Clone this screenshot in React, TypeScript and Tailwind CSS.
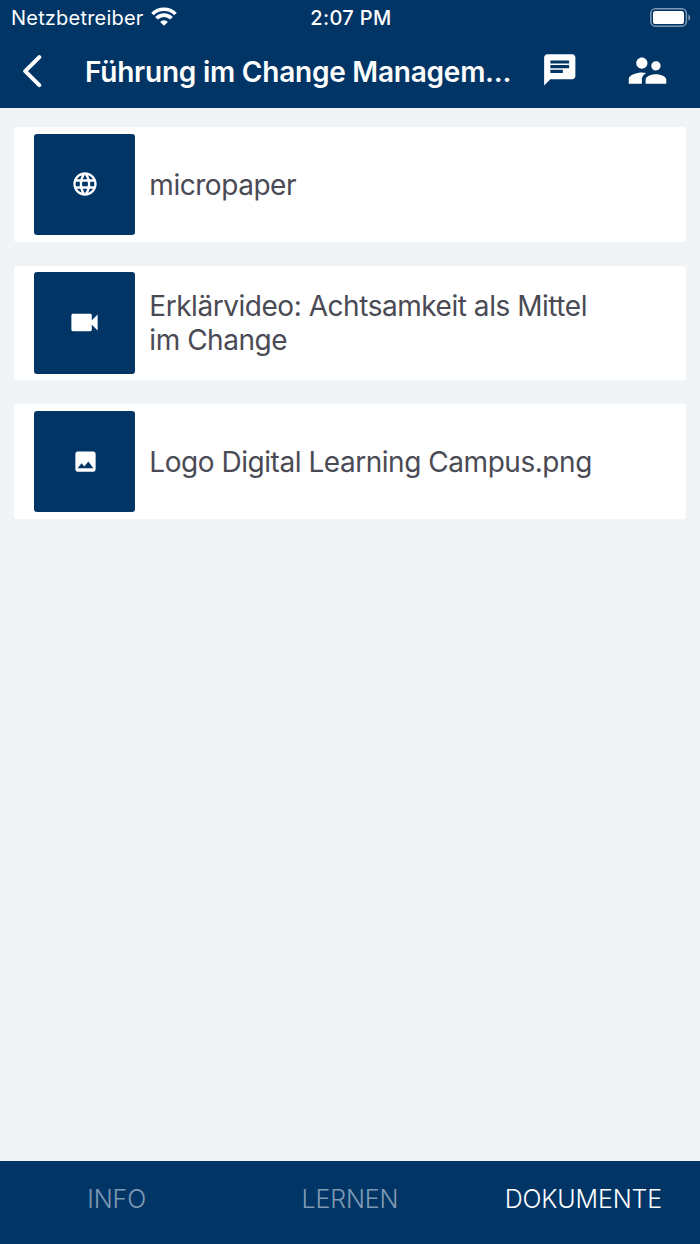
import type { IconType } from "react-icons";
import {
    MdChat,
    MdImage,
    MdLanguage,
    MdSupervisorAccount,
    MdVideocam,
} from "react-icons/md";

interface CourseDocument {
    title: string;
    icon: IconType;
    iconClass: string;
}

const documents: CourseDocument[] = [
    { title: "micropaper", icon: MdLanguage, iconClass: "size-[28px]" },
    {
        title: "Erklärvideo: Achtsamkeit als Mittel im Change",
        icon: MdVideocam,
        iconClass: "size-[35px]",
    },
    {
        title: "Logo Digital Learning Campus.png",
        icon: MdImage,
        iconClass: "size-[27px] ml-[2px]",
    },
];

const tabs = ["Info", "Lernen", "Dokumente"];

function StatusBar() {
    return (
        <div className="grid h-9 grid-cols-3 items-center pl-[11px] pr-[9px] text-[20px] leading-9">
            <div className="flex items-center gap-2">
                <span className="tracking-[0.2px]">Netzbetreiber</span>
                <svg
                    viewBox="0 0 26 19"
                    className="mb-[3px] -ml-px h-[19px] w-[26px] shrink-0"
                    fill="none"
                    stroke="currentColor"
                    strokeWidth="3.7"
                >
                    <path d="M1.5 7a16.3 16.3 0 0 1 23 0" />
                    <path d="M5.5 11.2a10.6 10.6 0 0 1 15 0" />
                    <path
                        d="M13 18.8l-3.9-3.9a5.5 5.5 0 0 1 7.8 0z"
                        fill="currentColor"
                        stroke="none"
                    />
                </svg>
            </div>
            <span className="text-center font-medium tracking-[0.4px]">
                2:07 PM
            </span>
            <svg
                viewBox="0 0 41 19"
                className="mb-[2px] h-[19px] w-[41px] justify-self-end"
            >
                <rect
                    x="0.8"
                    y="0.8"
                    width="35.6"
                    height="17.4"
                    rx="4.8"
                    fill="none"
                    stroke="#fff"
                    strokeOpacity="0.5"
                    strokeWidth="1.5"
                />
                <rect x="3" y="3" width="31" height="13" rx="2.6" fill="#fff" />
                <path
                    d="M38.4 6.4c2.4 1 2.4 5.2 0 6.2z"
                    fill="#fff"
                    fillOpacity="0.5"
                />
            </svg>
        </div>
    );
}

function Header() {
    return (
        <header className="h-[108px] shrink-0 bg-[#003566] text-white">
            <StatusBar />
            <div className="flex h-[70px] items-center pl-[22px] pr-[30px]">
                <button aria-label="Zurück">
                    <svg
                        viewBox="0 0 20 34"
                        className="h-[34px] w-[20px]"
                        fill="none"
                        stroke="currentColor"
                        strokeWidth="4"
                        strokeLinecap="round"
                        strokeLinejoin="round"
                    >
                        <path d="M17.3 3.2L3.2 17.2l14.1 14" />
                    </svg>
                </button>
                <h1 className="ml-[43px] w-[430px] truncate pt-px text-[28px] font-semibold tracking-[-0.23px]">
                    Führung im Change Managem...
                </h1>
                <button aria-label="Chat" className="mb-[2px] ml-[26px]">
                    <MdChat className="size-[37.5px]" />
                </button>
                <button aria-label="Teilnehmer" className="mb-[2px] ml-[46px]">
                    <MdSupervisorAccount className="size-[45px]" />
                </button>
            </div>
        </header>
    );
}

function DocumentCard({ title, icon: Icon, iconClass }: CourseDocument) {
    return (
        <li className="flex h-[114.67px] items-center rounded-[3px] bg-white pl-5 pr-20">
            <div className="flex size-[101.33px] shrink-0 items-center justify-center rounded-[3px] bg-[#003566] text-white">
                <Icon className={iconClass} />
            </div>
            <span className="ml-[14px] pt-px text-[28px] leading-[34px] tracking-[-0.46px] text-[#4a4a54]">
                {title}
            </span>
        </li>
    );
}

export default function App() {
    const activeTab = "Dokumente";

    return (
        <div className="flex h-[1244px] w-[700px] flex-col overflow-hidden bg-[#f0f4f7] font-['Inter',sans-serif]">
            <Header />
            <ul className="flex flex-1 flex-col gap-6 px-[14px] pt-[19px]">
                {documents.map((doc) => (
                    <DocumentCard key={doc.title} {...doc} />
                ))}
            </ul>
            <nav className="grid h-[83px] shrink-0 grid-cols-3 bg-[#003566] pb-[6px] text-[25px] font-light tracking-[-0.15px]">
                {tabs.map((tab) => (
                    <button
                        key={tab}
                        className={
                            tab === activeTab
                                ? "uppercase text-white"
                                : "uppercase text-[#7f9ab3]"
                        }
                    >
                        {tab}
                    </button>
                ))}
            </nav>
        </div>
    );
}
